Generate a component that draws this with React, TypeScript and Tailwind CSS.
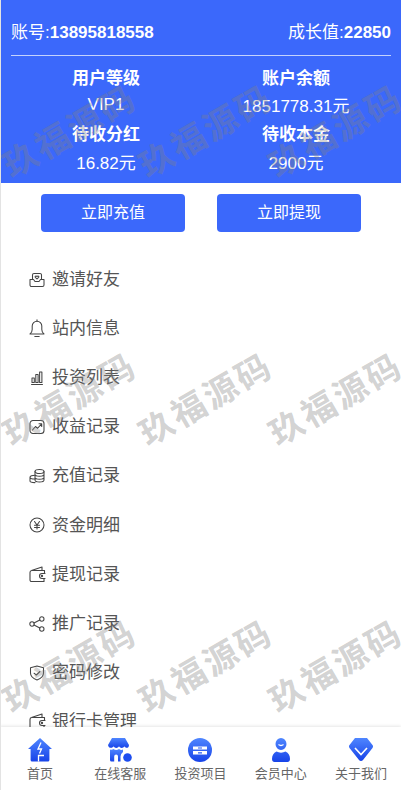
import React from "react";

const font = { fontFamily: '"Liberation Sans", "Noto Sans CJK SC", sans-serif' };

const S = ({ children, w = 16, h = 16 }: { children: React.ReactNode; w?: number; h?: number }) => (
  <svg width={w} height={h} viewBox="0 0 16 16" fill="none" stroke="#444" strokeWidth="1.050" strokeLinecap="round" strokeLinejoin="round" className="shrink-0">
    {children}
  </svg>
);

const Invite = () => (
  <S>
    <path d="M3.500 7V3a1.500 1.500 0 0 1 1.500-1.500h6A1.500 1.500 0 0 1 12.500 3v4" />
    <path d="M1 7.500h3.500l1.500 2h4l1.500-2H15v5.500a1.500 1.500 0 0 1-1.500 1.500h-11A1.500 1.500 0 0 1 1 13z" />
    <path d="M8 7 6.300 5.300c-.6-.8.6-1.800 1.700-.8 1.100-1 2.300 0 1.700.8z" />
  </S>
);
const Bell = () => (
  <svg width="16" height="19" viewBox="0 0 16 19" fill="none" stroke="#444" strokeWidth="1.050" strokeLinecap="round" strokeLinejoin="round" className="shrink-0">
    <path d="M1 15c1.500-1.200 2.200-2.500 2.200-4.500V7a4.800 4.800 0 0 1 9.600 0v3.500c0 2 .7 3.300 2.200 4.500z" />
    <path d="M8 .8v1.400M5.800 17.500h4.400" />
  </svg>
);
const Bars = () => (
  <svg width="16" height="16" viewBox="0 0 16 16" fill="none" stroke="#444" strokeWidth="1.050" strokeLinecap="round" strokeLinejoin="round" className="shrink-0">
    <path d="M2.500 14.500h11" />
    <rect x="3" y="8" width="2.300" height="4.500" />
    <rect x="6.800" y="4.500" width="2.300" height="8" />
    <rect x="10.600" y="2" width="2.300" height="10.500" />
  </svg>
);
const Trend = () => (
  <S>
    <rect x="1" y="1.500" width="14" height="13" rx="3" />
    <path d="M3.500 11 6.500 7.500l2 1.800 4-4.300M10 4.800h2.700v2.700" />
  </S>
);
const Coins = () => (
  <S>
    <ellipse cx="10.500" cy="3.500" rx="4.500" ry="2" />
    <path d="M6 3.500v8.500c0 1 2 2 4.500 2s4.500-1 4.500-2V3.500M6 6.300c0 1 2 2 4.500 2s4.500-1 4.500-2M6 9.200c0 1 2 2 4.500 2s4.500-1 4.500-2" />
    <path d="M6 7.300c-2.600 0-5 .8-5 1.900v3.800c0 1 2 1.600 5 1.600M1 9.200c0 1 2.200 1.800 5 1.800" />
  </S>
);
const Yen = () => (
  <S>
    <circle cx="8" cy="8" r="7" />
    <path d="M5.500 4.500 8 8l2.500-3.500M5.500 8.300h5M5.500 10.500h5M8 8v4" />
  </S>
);
const Wallet = () => (
  <svg width="17" height="17" viewBox="0 0 17 17" fill="none" stroke="#444" strokeWidth="1.100" strokeLinecap="round" strokeLinejoin="round" className="shrink-0">
    <path d="M1 6.500a2 2 0 0 1 1.500-2L13 1v3.500M1 6.500V14a1.500 1.500 0 0 0 1.500 1.500H15V12.500M15.500 7.500V4.500H3" />
    <path d="M16 7.500h-3a2.500 2.500 0 0 0 0 5h3" />
    <circle cx="13" cy="10" r=".6" />
  </svg>
);
const Share = () => (
  <S>
    <circle cx="3" cy="8" r="2.200" />
    <circle cx="12.800" cy="3" r="2.200" />
    <circle cx="12.800" cy="13" r="2.200" />
    <path d="M5 7 10.800 4M5 9l5.800 3" />
  </S>
);
const Shield = () => (
  <S>
    <path d="M8 1 14.500 2.800V8c0 3.300-2.800 5.700-6.500 7C4.300 13.700 1.500 11.300 1.500 8V2.800z" />
    <path d="M5 8.200 7.300 10 11 6.500" />
  </S>
);

const menu: [string, React.ComponentType][] = [
  ["邀请好友", Invite],
  ["站内信息", Bell],
  ["投资列表", Bars],
  ["收益记录", Trend],
  ["充值记录", Coins],
  ["资金明细", Yen],
  ["提现记录", Wallet],
  ["推广记录", Share],
  ["密码修改", Shield],
  ["银行卡管理", Wallet],
];

const Grad = ({ id }: { id: string }) => (
  <defs>
    <linearGradient id={id} x1="0" y1="0" x2="0" y2="1">
      <stop offset="0" stopColor="#4f86ff" />
      <stop offset="1" stopColor="#1743e8" />
    </linearGradient>
  </defs>
);

const TabHome = () => (
  <svg width="24" height="24" viewBox="0 0 24 24">
    <Grad id="g1" />
    <path fill="url(#g1)" d="M12 0 24 11h-2.600v11a1.500 1.500 0 0 1-1.500 1.500H4.100A1.500 1.500 0 0 1 2.600 22V11H0z" />
    <path d="M13 4.500 10 11h3.500L11.500 15.500M16 17.500h-5.500v6" fill="none" stroke="#fff" strokeWidth="1.300" />
  </svg>
);
const TabStore = () => (
  <svg width="24" height="24" viewBox="0 0 24 24">
    <Grad id="g2" />
    <path fill="url(#g2)" d="M4 0h13l4 7c0 3.500-3.500 3.500-4.700 1.300-1 2.200-4 2.200-5.300 0-1.300 2.200-4.300 2.200-5.300 0C4.500 10.500 .5 10.500 0 7z" />
    <path fill="url(#g2)" d="M2 11.500c1.200.5 2.500.3 3.500-.5 1.500 1.300 3.800 1.300 5.500 0 1.200 1 2.800 1.200 4 .6V14a5.500 5.500 0 0 0-2.500 4.500V23.500H10V18.500a1.900 1.900 0 0 0-3.800 0v5H3.500A1.500 1.500 0 0 1 2 22z" />
    <circle cx="19.500" cy="19.500" r="4.300" fill="#1d4df0" />
  </svg>
);
const TabBox = () => (
  <svg width="24" height="24" viewBox="0 0 24 24">
    <Grad id="g3" />
    <circle cx="12" cy="12" r="12" fill="url(#g3)" />
    <path d="M5 8.500h14v3H5zM5 13h14v3.500H5z" fill="#fff" />
    <path d="M10 10h4M10 14.800h4" stroke="#2a5cf5" strokeWidth="1.200" />
  </svg>
);
const TabUser = () => (
  <svg width="18" height="24" viewBox="0 0 18 24">
    <Grad id="g4" />
    <path fill="url(#g4)" d="M9 0a5.500 6 0 0 1 0 12A5.500 6 0 0 1 9 0zM4.500 13.500c2.500 1.500 6.500 1.500 9 0C16.500 15 18 17.500 18 21c0 1.700-1 3-2.500 3h-13C1 24 0 22.700 0 21c0-3.500 1.500-6 4.500-7.500z" />
    <path d="M6.500 6.500c1.500 1.200 3.500 1.200 5 0" fill="none" stroke="#fff" strokeWidth="1.300" />
  </svg>
);
const TabGem = () => (
  <svg width="24" height="24" viewBox="0 0 24 24">
    <Grad id="g5" />
    <path fill="url(#g5)" d="M6 0h12l5.500 7c.7 1 .7 2 0 3L14 22c-1 1.300-3 1.300-4 0L.5 10c-.7-1-.7-2 0-3z" />
    <path d="M6 10l6 6.500L18 10" fill="none" stroke="#fff" strokeWidth="1.600" />
  </svg>
);

const tabs: [string, React.ComponentType][] = [
  ["首页", TabHome],
  ["在线客服", TabStore],
  ["投资项目", TabBox],
  ["会员中心", TabUser],
  ["关于我们", TabGem],
];

const stats = [
  ["用户等级", "VIP1", "mt-[2px]"],
  ["账户余额", "1851778.31元", "mt-[4px]"],
  ["待收分红", "16.82元", "mt-[5px]"],
  ["待收本金", "2900元", "mt-[5px]"],
];

const marks: string[] = [
  "left-[-6px] top-[108px]",
  "left-[130px] top-[108px]",
  "left-[260px] top-[108px]",
  "left-[-6px] top-[376px]",
  "left-[130px] top-[376px]",
  "left-[260px] top-[376px]",
  "left-[-6px] top-[643px]",
  "left-[130px] top-[643px]",
  "left-[260px] top-[643px]",
];

export default function App() {
  return (
    <div style={font} className="relative flex flex-col w-[401px] h-[790px] overflow-hidden bg-white border-l border-[#e3e3e3]">
      <main className="flex-1 min-h-0 overflow-hidden">
        <header className="h-[183px] bg-[#3b68fb] text-white px-[10px] pt-[21px]">
          <div className="flex justify-between items-center h-[24px] text-[17px] leading-[24px]">
            <span>账号:<b>13895818558</b></span>
            <span>成长值:<b>22850</b></span>
          </div>
          <div className="h-px bg-[#c4d2fd] mt-[10px]" />
          <div className="grid grid-cols-2 pt-[11px]">
            {stats.map(([k, v, c]) => (
              <div key={k} className="flex flex-col items-center h-[56px] text-[17px] leading-[24px]">
                <b>{k}</b>
                <span className={c}>{v}</span>
              </div>
            ))}
          </div>
        </header>
        <div className="flex gap-[32px] pl-[40px] pt-[11px]">
          <button className="w-[144px] h-[38px] rounded bg-[#3b68fb] text-white text-[16px]">立即充值</button>
          <button className="w-[144px] h-[38px] rounded bg-[#3b68fb] text-white text-[16px]">立即提现</button>
        </div>
        <ul className="pt-[23px] pl-[28px]">
          {menu.map(([label, Icon]) => (
            <li key={label} className="flex items-center h-[49.15px] text-[17px] text-[#555]">
              <span className="w-[23px] flex shrink-0">
                <Icon />
              </span>
              <span>{label}</span>
            </li>
          ))}
        </ul>
      </main>
      <nav className="h-[63px] shrink-0 grid grid-cols-5 bg-white shadow-[0_-1px_3px_rgba(0,0,0,0.1)] z-10 pt-[11px] -ml-px">
        {tabs.map(([label, Icon]) => (
          <div key={label} className="flex flex-col items-center text-[13px] leading-[16px] text-[#666]">
            <Icon />
            <span className="mt-[4px]">{label}</span>
          </div>
        ))}
      </nav>
      {marks.map((m) => (
        <div
          key={m}
          className={`absolute ${m} pointer-events-none text-[34px] tracking-[3px] leading-[44px] font-semibold whitespace-nowrap text-[rgba(130,130,130,0.36)] -rotate-30`}
          style={{ fontFamily: '"Noto Sans CJK SC", sans-serif' }}
        >
          玖福源码
        </div>
      ))}
    </div>
  );
}
